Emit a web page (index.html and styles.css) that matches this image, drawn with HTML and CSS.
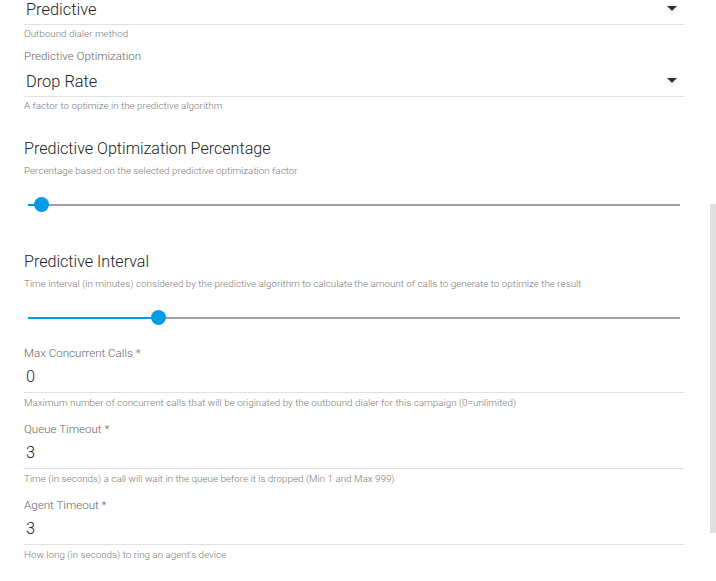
FILE: index.html
```html
<!DOCTYPE html>
<html lang="en">
<head>
    <meta charset="UTF-8">
    <meta name="viewport" content="width=device-width, initial-scale=1.0">
    <title>Campaign Dialer Settings</title>
    <link rel="stylesheet" href="styles.css">
</head>
<body>
    <div class="form">
        <!-- Dialer method -->
        <div class="field select">
            <div class="field-input">
                <span>Predictive</span>
                <span class="arrow"></span>
            </div>
            <div class="field-help">Outbound dialer method</div>
        </div>

        <div class="field select">
            <div class="field-label">Predictive Optimization</div>
            <div class="field-input">
                <span>Drop Rate</span>
                <span class="arrow"></span>
            </div>
            <div class="field-help">A factor to optimize in the predictive algorithm</div>
        </div>

        <!-- Sliders -->
        <div class="slider-block">
            <h3>Predictive Optimization Percentage</h3>
            <div class="field-help">Percentage based on the selected predictive optimization factor</div>
            <div class="slider">
                <div class="track"></div>
                <div class="fill" style="width: 2%"></div>
                <div class="thumb" style="left: 2%"></div>
            </div>
        </div>

        <div class="slider-block">
            <h3>Predictive Interval</h3>
            <div class="field-help">Time interval (in minutes) considered by the predictive algorithm to calculate the amount of calls to generate to optimize the result</div>
            <div class="slider">
                <div class="track"></div>
                <div class="fill" style="width: 20%"></div>
                <div class="thumb" style="left: 20%"></div>
            </div>
        </div>

        <!-- Numeric fields -->
        <div class="numbers">
            <div class="field number">
                <div class="field-label">Max Concurrent Calls *</div>
                <div class="field-input">0</div>
                <div class="field-help">Maximum number of concurrent calls that will be originated by the outbound dialer for this campaign (0=unlimited)</div>
            </div>
            <div class="field number">
                <div class="field-label">Queue Timeout *</div>
                <div class="field-input">3</div>
                <div class="field-help">Time (in seconds) a call will wait in the queue before it is dropped (Min 1 and Max 999)</div>
            </div>
            <div class="field number">
                <div class="field-label">Agent Timeout *</div>
                <div class="field-input">3</div>
                <div class="field-help">How long (in seconds) to ring an agent's device</div>
            </div>
        </div>
    </div>

    <div class="scroll-thumb"></div>
</body>
</html>
```

FILE: styles.css
```css
body {
    font-family: Roboto, 'Liberation Sans', sans-serif;
    font-weight: 300;
    background: #fff;
    color: #222;
    margin: 0;
    height: 581px;
    overflow: hidden;
    position: relative;
}
.form {
    width: 660px;
    padding-left: 24px;
}
.field-label {
    font-size: 11.6px;
    line-height: 14px;
    color: #666;
}
.field-input {
    font-size: 16.4px;
    line-height: 20px;
    padding-left: 2px;
    border-bottom: 1px solid #e0e0e0;
    display: flex;
    align-items: center;
    justify-content: space-between;
}
.field-help {
    font-size: 9.85px;
    line-height: 12px;
    color: #7a7a7a;
    white-space: nowrap;
}
.select {
    margin-bottom: 9px;
}
.select .field-label {
    margin-bottom: 9px;
}
.select .field-input {
    padding-bottom: 4px;
}
.select .field-help {
    margin-top: 3px;
}
.arrow {
    width: 0;
    height: 0;
    border-left: 5px solid transparent;
    border-right: 5px solid transparent;
    border-top: 5px solid #333;
    margin-right: 7px;
    margin-top: -3px;
}
.slider-block h3 {
    font-size: 16.1px;
    line-height: 20px;
    font-weight: 300;
    color: #222;
    margin: 27px 0 6px;
}
.slider-block + .slider-block h3 {
    margin-top: 32px;
}
.slider {
    position: relative;
    height: 30px;
    margin: 13px 4px 0;
}
.track {
    position: absolute;
    left: 0;
    right: 0;
    top: 14px;
    height: 2px;
    background: #9e9e9e;
}
.fill {
    position: absolute;
    left: 0;
    top: 14px;
    height: 2px;
    background: #039be5;
}
.thumb {
    position: absolute;
    top: 7px;
    width: 15px;
    height: 15px;
    margin-left: -7px;
    border-radius: 50%;
    background: #039be5;
}
.numbers {
    margin-top: 13px;
}
.number {
    margin-bottom: 13px;
}
.number .field-label {
    margin-bottom: 7px;
}
.number .field-input {
    padding-bottom: 5px;
}
.number .field-help {
    margin-top: 4px;
}
.scroll-thumb {
    position: absolute;
    right: 0;
    top: 204px;
    width: 6px;
    height: 329px;
    background: #e0e0e0;
}
```
